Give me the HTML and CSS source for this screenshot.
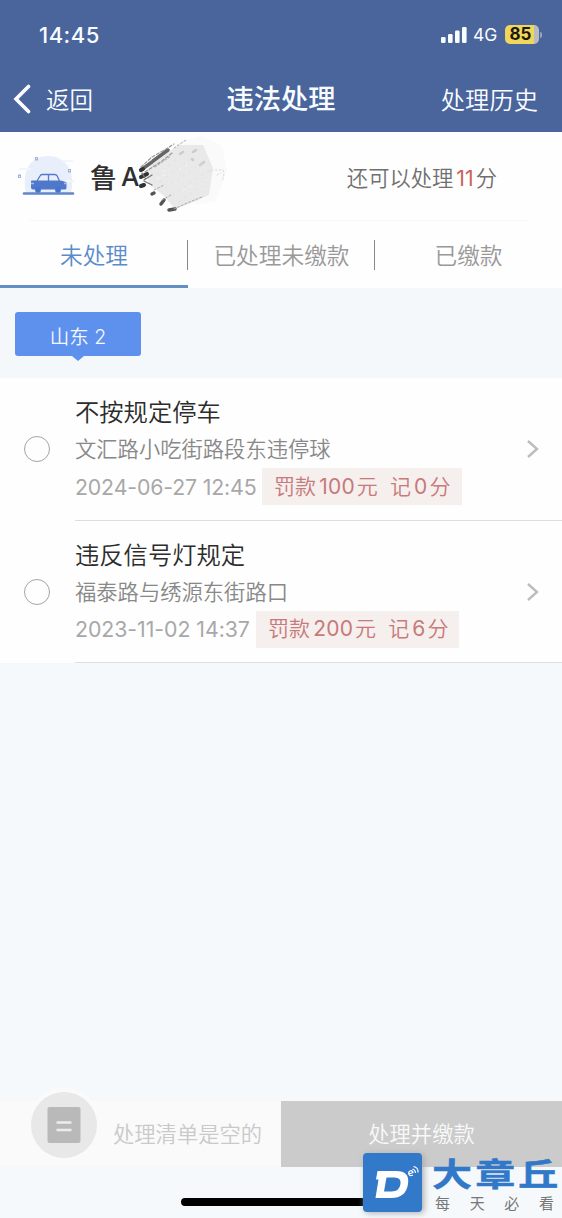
FILE: index.html
```html
<!DOCTYPE html>
<html lang="zh-CN">
<head>
<meta charset="utf-8">
<title>违法处理</title>
<link rel="stylesheet" href="styles.css">
</head>
<body>
<div class="screen">
  <header class="top">
    <div class="status">
      <span class="time">14:45</span>
      <div class="status-right">
        <svg class="signal" width="26" height="16" viewBox="0 0 26 16" fill="#f7fcff"><rect x="0" y="10" width="4.6" height="6" rx="1.2"/><rect x="7" y="7" width="4.6" height="9" rx="1.2"/><rect x="14" y="3.500" width="4.600" height="12.500" rx="1.200"/><rect x="21" y="0" width="4.600" height="16" rx="1.200"/></svg>
        <span class="net">4G</span>
        <span class="battery">85</span>
        <span class="battery-tip"></span>
      </div>
    </div>
    <nav class="nav">
      <a class="back"><svg width="18" height="30" viewBox="0 0 18 30"><path d="M15.500 2.500 3 15l12.500 12.500" fill="none" stroke="#fff" stroke-width="3.600" stroke-linecap="round"/></svg><span>返回</span></a>
      <h1>违法处理</h1>
      <a class="history">处理历史</a>
    </nav>
  </header>

  <section class="vehicle">
    <svg class="car" width="60" height="46" viewBox="0 0 60 46">
      <path d="M10 40C5 16 16 3 32 3s28 13 23 37z" fill="#e9eefb"/>
      <path d="M47 8h10M3 16h12M50 28h8" stroke="#f1f5fd" stroke-width="2"/>
      <g fill="none" stroke="#9fb1de" stroke-width="1"><rect x="19.500" y="4.500" width="2" height="2.500"/><rect x="2.500" y="22" width="2" height="2.500"/><rect x="52.500" y="16.500" width="2" height="2.500"/></g>
      <path d="M21 28l3-5q.7-1.500 2.300-1.500h12.400q1.700 0 2.500 1.500l2.300 5M32.500 21.500V28" fill="none" stroke="#5279cc" stroke-width="1.300"/>
      <path d="M15.500 27.500h28q5.500.5 7 2.500v5q0 1.500-2 1.500H17q-2 0-2-2v-6z" fill="#4f78cb"/>
      <path d="M15 30.500h3M48 30.500h3" stroke="#a7bdf0" stroke-width="1.400"/>
      <circle cx="22" cy="37" r="2.900" fill="#4673cc"/><circle cx="42" cy="37" r="2.900" fill="#4673cc"/>
      <path d="M8 40.500h49" stroke="#6385c9" stroke-width="2.600" stroke-linecap="round"/>
    </svg>
    <div class="plate"><span>鲁</span><span class="letter">A</span>
      <svg class="scribble" width="96" height="84" viewBox="0 0 96 84">
        <path d="M47 5 65 1 85 11 90 35 79 66 58 70z" fill="#fafafa"/>
        <path d="M8 38 17 27 30 18 42 10 66 10 76 33 72 60 52 69 38 74 27 61 14 51z" fill="#e9e9e9"/>
        <g fill="none" stroke-linecap="round">
          <path d="M4 35 15 27M16 26 31 15" stroke="#666" stroke-width="3.500"/>
          <path d="M4 32 15 22 29 14 37 9M8 37l17-11 10-8" stroke="#999" stroke-width="1.200" stroke-dasharray="3 2"/>
          <path d="M4 35l2-1M4 42l6-3M4 51l3-1" stroke="#333" stroke-width="4"/>
          <path d="M7 45l8-5M7 46l8 4M5 38l3 5" stroke="#777" stroke-width="1.300"/>
          <path d="M15 59l2-1M24 69l3-4M32 75l6-1" stroke="#555" stroke-width="3.500"/>
          <path d="M17 55l10-5M25 65l9-5M37 74l13-6 15-6M18 32l16-11M37 13 49 5" stroke="#aaa" stroke-dasharray="2 2"/>
          <path d="M43 19l3-2M56 17l3-2M55 24l1 1M63 30l4-3" stroke="#ccc" stroke-width="2.500"/>
          <path d="M21 39l20-16M24 46l34-25M29 53l38-26M36 60l33-23M42 67l29-21M60 65l8-5" stroke="#ddd" stroke-dasharray="1 6"/>
          <path d="M20 44l8-4M26 36l7-3M46 55l12-6M42 34l10-5M64 50l7-5" stroke="#f7f7f7" stroke-dasharray="2 5"/>
          <path d="M71 36h5M78 35h8q2 5-1 11M80 40l4-2" stroke="#ddd" stroke-dasharray="2 2"/>
        </g>
      </svg>
    </div>
    <p class="remain">还可以处理<b>11</b>分</p>
  </section>
  <div class="tabs"><div class="tab active">未处理</div><div class="tab">已处理未缴款</div><div class="tab">已缴款</div></div>
  <div class="region"><div class="province">山东 2</div></div>

  <main class="list">
    <article class="item">
      <span class="radio"></span>
      <div class="body">
        <div class="text"><h2>不按规定停车</h2><p class="address">文汇路小吃街路段东违停球</p>
        <div class="meta"><time class="date1">2024-06-27 12:45</time><span class="tag tag1">罚款<i>100</i>元<span class="points">记<i class="one">0</i>分</span></span></div></div>
        <svg class="arrow" width="14" height="20" viewBox="0 0 14 20"><path d="M3 2l9 8-9 8" fill="none" stroke="#bdbdbd" stroke-width="2.400"/></svg>
      </div>
    </article>
    <article class="item">
      <span class="radio"></span>
      <div class="body">
        <div class="text"><h2>违反信号灯规定</h2><p class="address">福泰路与绣源东街路口</p>
        <div class="meta"><time class="date2">2023-11-02 14:37</time><span class="tag tag2">罚款<i>200</i>元<span class="points">记<i class="one">6</i>分</span></span></div></div>
        <svg class="arrow" width="14" height="20" viewBox="0 0 14 20"><path d="M3 2l9 8-9 8" fill="none" stroke="#bdbdbd" stroke-width="2.400"/></svg>
      </div>
    </article>
  </main>

  <footer class="bottom">
    <div class="basket">
      <div class="basket-icon"><svg width="34" height="36" viewBox="0 0 34 36"><rect x=".5" width="33" height="36" rx="2" fill="#b9b9b9"/><path d="M9.500 15.500h15M9.500 23h15" stroke="#ededed" stroke-width="2.600"/></svg></div>
      <span>处理清单是空的</span>
    </div>
    <div class="pay">处理并缴款</div>
  </footer>
  <div class="home"></div>
  <aside class="brand">
    <svg width="59" height="59" viewBox="0 0 59 59"><rect width="59" height="59" rx="4" fill="#3379ca"/><path fill-rule="evenodd" d="M14.500 18H33q14 0 12 13-2 14-17 14H12.500l3-18.500h-2.500zm9 6.500L21 38.500h7.500q8 0 9-7.500 1-6.500-6-6.500z" fill="#fff"/><g fill="none" stroke="#fff" stroke-width="1.200"><path d="M46 21l4-1.500q-1-2.500-3-1.500-2 1-1 3.500 1 2 4 .5M49.500 16q3 1 3 4M50.500 13.500q5 1 4.500 6"/></g></svg>
    <div class="brand-text"><strong>大章丘</strong><small><span>每</span><span>天</span><span>必</span><span>看</span></small></div>
  </aside>
</div>
</body>
</html>
```
FILE: styles.css
```css
* { box-sizing: border-box; }
body, h1, h2, p { margin: 0; }
body { background: #f5f9fc; font-family: Inter, "Noto Sans CJK SC", sans-serif; }
.screen { position: relative; width: 562px; height: 1218px; overflow: hidden; display: flex; flex-direction: column; background: #f5f9fc; white-space: nowrap; }
.top { height: 132px; flex: none; background: #4a649c; border-bottom: 1px solid #53629a; color: #f8fcff; }
.status { height: 66px; padding: 3px 21px 0 39px; display: flex; justify-content: space-between; align-items: center; }
.time { font-size: 22px; font-weight: 500; letter-spacing: .5px; }
.status-right { display: flex; align-items: center; }
.net { font-size: 17.500px; margin: 0 7px 0 6px; width: 25px; }
.battery { width: 34px; height: 19px; border-radius: 5px; background: linear-gradient(90deg, #f0d75c 85%, #b8bcc1 85%); color: #1b180e; font-size: 17px; line-height: 19px; font-weight: 700; text-align: center; padding-right: 3px; }
.battery-tip { width: 2px; height: 6px; border-radius: 0 3px 3px 0; background: #98a6c0; margin-left: 1px; margin-right: -1px; }
.nav { height: 65px; display: grid; grid-template-columns: 1fr auto 1fr; align-items: center; padding: 0 24px 0 14px; }
.back { display: flex; align-items: center; gap: 14px; font-size: 23.500px; }
.back span, .history { font-weight: 350; }
.back svg { margin-left: -1px; margin-right: 1px; }
.nav h1 { font-size: 27.300px; font-weight: 500; line-height: 40px; transform: translate(5px, 1px); }
.history { font-size: 24.300px; text-align: right; }
.vehicle { height: 89px; flex: none; background: #fefefe; display: flex; padding: 0 65px 0 16px; align-items: center; position: relative; }
.vehicle::after { content: ""; position: absolute; left: 30px; right: 33px; bottom: 0; height: 1px; background: #f6f6f6; }
.car { margin-top: -1px; }
.plate { position: relative; margin-left: 14px; display: flex; gap: 4px; align-items: center; font-size: 27px; color: #303030; font-weight: 500; }
.letter { font-size: 26px; font-weight: 500; }
.scribble { position: absolute; left: 47px; top: -22px; }
.remain { margin-left: auto; font-size: 21.300px; color: #6f6f6f; font-weight: 350; }
.remain b { color: #cc6259; font-weight: 400; margin: 0 2px 0 3px; }
.tabs { height: 67px; flex: none; display: grid; grid-template-columns: 188px 187px 187px; background: #fefefe; }
.tab { display: flex; align-items: center; justify-content: center; font-size: 22.700px; color: #999; font-weight: 350; border-bottom: 3px solid transparent; padding-top: 3px; position: relative; }
.tab.active { color: #5a8bca; border-color: #638fc4; }
.tab:not(:last-child)::after { content: ""; position: absolute; right: 0; top: 19px; width: 1px; height: 30px; background: #888; }
.region { height: 90px; flex: none; padding: 24px 15px; background: #f5f8fa; }
.province { position: relative; width: 126px; height: 44px; border-radius: 3px; background: #5e90ed; color: #f3f9ff; font-size: 19.500px; text-align: center; line-height: 51px; font-weight: 350; }
.province::after { content: ""; position: absolute; top: 44px; left: 57px; border: 6px solid transparent; border-top: 5px solid #5e90ed; border-bottom: 0; }
.list { background: #fefefe; height: 285px; flex: none; }
.item { display: flex; height: 142.500px; }
.radio { width: 26px; height: 26px; border: 1.600px solid #a4a4a4; border-radius: 50%; margin: 58px 25px 0 24px; flex: none; }
.body { flex: 1; display: flex; justify-content: space-between; border-bottom: 1px solid #dedede; padding: 16px 23px 0 0; }
.text h2 { font-size: 24.300px; line-height: 36px; height: 36px; font-weight: 350; color: #2c2c2c; }
.address { font-size: 21.300px; line-height: 38px; color: #888; font-weight: 350; }
.meta { display: flex; height: 37px; align-items: center; color: #a8a8a8; font-size: 21.300px; }
time { font-weight: 400; }
.date1 { width: 187px; letter-spacing: -.15px; }
.date2 { width: 181px; letter-spacing: -.05px; }
.tag { height: 37px; background: #f5efee; color: #c87979; display: flex; align-items: center; padding-left: 12px; letter-spacing: .1px; font-size: 21px; font-weight: 350; line-height: 36px; }
.tag1 { width: 200px; }
.tag2 { width: 203px; }
.tag i { font-style: normal; font-weight: 400; margin: 0 2px 0 3px; letter-spacing: .2px; }
.points { margin-left: 12px; display: flex; align-items: center; }
.arrow { margin-top: 45px; }
.bottom { position: absolute; top: 1101px; left: 0; width: 562px; height: 66px; display: flex; background: #fafafa; }
.basket { width: 281px; display: flex; align-items: center; gap: 16px; padding-left: 31px; color: #c9c9c9; font-size: 21.300px; font-weight: 350; }
.basket span { margin-top: -3px; }
.basket-icon { width: 66px; height: 66px; border-radius: 50%; background: #e8e8e8; box-shadow: 0 0 0 4px #fafafa; display: grid; place-items: center; transform: translateY(-9px); }
.pay { width: 281px; background: #cbcbcb; color: #f9f9f9; font-size: 21.300px; text-align: center; line-height: 66px; font-weight: 350; }
.home { position: absolute; left: 181px; top: 1198px; width: 200px; height: 8px; border-radius: 4px; background: #000; }
.brand { position: absolute; left: 363px; top: 1153px; display: flex; }
.brand > svg { filter: drop-shadow(2px 1px 3px #aaa); }
.brand-text { margin-left: 10px; display: flex; flex-direction: column; width: 126px; }
.brand strong { font: 700 32px/40px "Noto Sans CJK SC", sans-serif; color: #3278c8; letter-spacing: 2.500px; width: 105px; transform: translateY(-1px) scaleX(1.250); transform-origin: left; height: 40px; -webkit-text-stroke: .5px #3278c8; }
.brand small { font-size: 15px; line-height: 20px; display: flex; justify-content: space-between; padding: 1px 4px 0 3px; color: #777; }
```
